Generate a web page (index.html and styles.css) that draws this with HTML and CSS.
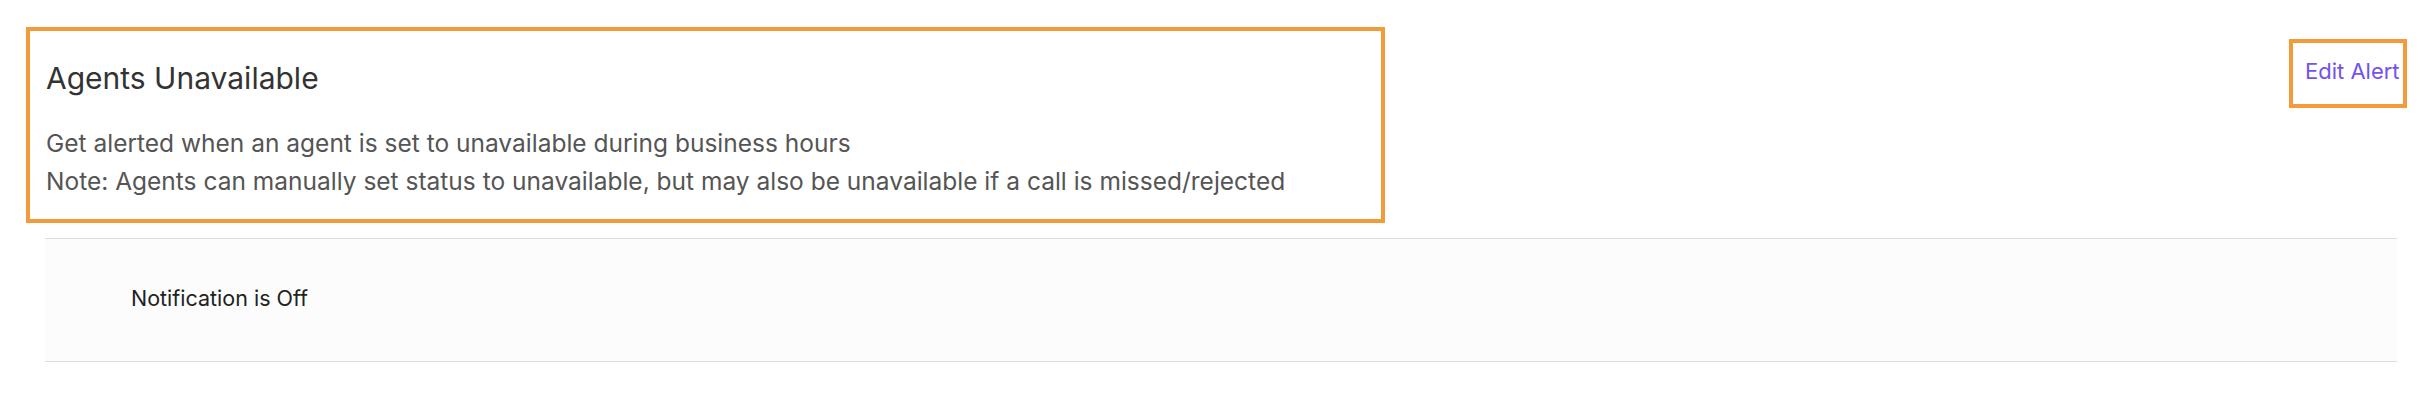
FILE: index.html
```html
<!DOCTYPE html>
<html lang="en">
<head>
    <meta charset="UTF-8">
    <meta name="viewport" content="width=device-width, initial-scale=1.0">
    <title>Agents Unavailable</title>
    <link rel="stylesheet" href="styles.css">
</head>
<body>
    <div class="alert-page">
        <div class="alert-header">
            <div class="alert-info">
                <h2 class="alert-title">Agents Unavailable</h2>
                <p class="alert-desc">Get alerted when an agent is set to unavailable during business hours</p>
                <p class="alert-desc">Note: Agents can manually set status to unavailable, but may also be unavailable if a call is missed/rejected</p>
            </div>
            <div class="alert-action">
                <a href="#" class="edit-link">Edit Alert</a>
            </div>
        </div>
        <div class="alert-status">
            <span class="status-text">Notification is Off</span>
        </div>
    </div>
</body>
</html>
```

FILE: styles.css
```css
body {
    font-family: 'Inter', 'Noto Sans', sans-serif;
    margin: 0;
    background-color: #fff;
    color: #333;
}
.alert-page {
    padding: 27px 25px 0 26px;
}
.alert-header {
    display: flex;
    justify-content: space-between;
    align-items: flex-start;
}
.alert-info {
    box-sizing: border-box;
    width: 1359px;
    height: 196px;
    border: 4px solid #f39a3a;
    padding: 27px 16px 0;
}
.alert-title {
    margin: 0 0 26px;
    font-size: 30px;
    font-weight: 400;
    line-height: 40px;
    color: #333;
}
.alert-desc {
    margin: 0;
    font-size: 24.5px;
    line-height: 38px;
    color: #555;
}
.alert-action {
    box-sizing: border-box;
    width: 118px;
    height: 69px;
    margin-top: 12px;
    border: 4px solid #f39a3a;
    padding: 13px 0 0 12px;
    white-space: nowrap;
}
.edit-link {
    font-size: 22px;
    line-height: 30px;
    color: #7352f0;
    text-decoration: none;
}
.alert-status {
    display: flex;
    align-items: center;
    height: 117px;
    margin: 15px 10px 0 19px;
    padding: 0 0 5px 86px;
    background: #fcfcfc;
    border-top: 1px solid #ddd;
    border-bottom: 1px solid #ddd;
}
.status-text {
    font-size: 21.5px;
    color: #222;
}
```
